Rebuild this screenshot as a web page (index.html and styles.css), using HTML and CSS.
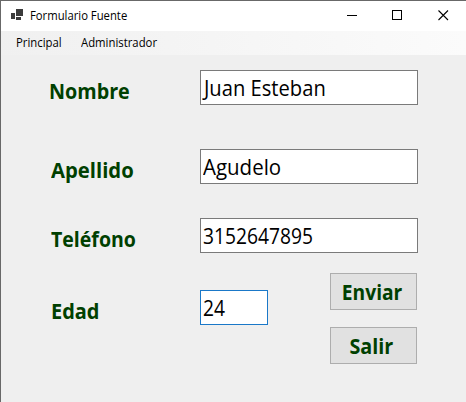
FILE: index.html
```html
<!DOCTYPE html>
<html lang="es">
<head>
<meta charset="utf-8">
<title>Formulario Fuente</title>
<link rel="stylesheet" href="styles.css">
</head>
<body>
<div class="window">
  <header class="titlebar">
    <svg class="app-icon" width="13" height="12" viewBox="0 0 13 12" fill="#3b3b3b" shape-rendering="crispEdges"><path d="M0 4h4v6H0zM5 0h7v7H5zM5 8h5v3H5z"/></svg>
    <span class="title">Formulario Fuente</span>
    <div class="controls">
      <svg width="46" height="30" viewBox="0 0 46 30" shape-rendering="crispEdges"><path d="M19 14.5h10" stroke="#000"/></svg>
      <svg width="46" height="30" viewBox="0 0 46 30" shape-rendering="crispEdges"><path d="M18.5 9.5h9v9h-9z" fill="none" stroke="#000"/></svg>
      <svg width="46" height="30" viewBox="0 0 46 30"><path d="M18.5 9.5l9.5 9.5M28 9.5l-9.5 9.5" stroke="#000" stroke-width="1.1"/></svg>
    </div>
  </header>
  <nav class="menu">
    <span class="menu-item principal">Principal</span>
    <span class="menu-item">Administrador</span>
  </nav>
  <main class="form">
    <div class="row"><span class="label nombre">Nombre</span><div class="field"><span class="value">Juan Esteban</span></div></div>
    <div class="row row-apellido"><span class="label apellido">Apellido</span><div class="field"><span class="value agudelo">Agudelo</span></div></div>
    <div class="row row-telefono"><span class="label telefono">Teléfono</span><div class="field"><span class="value digits">3152647895</span></div></div>
    <div class="bottom">
      <div class="row row-edad"><span class="label">Edad</span><div class="field small"><span class="value digits">24</span></div></div>
      <div class="actions">
        <div class="button"><span>Enviar</span></div>
        <div class="button"><span class="salir">Salir</span></div>
      </div>
    </div>
  </main>
</div>
</body>
</html>
```
FILE: styles.css
```css
* { box-sizing: border-box; }
body { margin: 0; font-family: "Open Sans", "Noto Sans", sans-serif; color: #000; }
.window { width: 466px; height: 402px; background: #efefef; border-top: 1px solid #686868; border-left: 1px solid #686868; overflow: hidden; }
.titlebar { display: flex; height: 30px; background: #fff; padding-left: 10px; }
.app-icon { margin-top: 8px; flex: none; }
.title { margin-left: 6px; font-size: 12px; line-height: 29px; white-space: nowrap; transform: scaleX(.94); transform-origin: 0 0; }
.controls { display: flex; margin-left: auto; }
.menu { display: flex; height: 24px; padding-left: 15px; background: linear-gradient(90deg, #f0f0f0, #fbfbfb); font-size: 12px; line-height: 24px; }
.menu-item { transform: scaleX(.945); transform-origin: 0 0; }
.principal { width: 65px; }
.form { padding: 15px 0 0 50px; font-size: 21px; }
.row { display: flex; height: 35px; }
.row-apellido { margin-top: 44px; }
.row-telefono { margin-top: 34px; }
.row-edad { margin-top: 37px; }
.label { width: 149px; line-height: 42px; font-weight: 700; color: #004000; transform: scaleX(.95); transform-origin: 0 0; }
.nombre { margin-left: -2px; width: 151px; transform: scaleX(.94); }
.apellido { transform: scaleX(.965); }
.telefono { transform: scaleX(.93); }
.field { width: 218px; height: 35px; border: 1px solid #7a7a7a; background: #fff; padding-left: 2px; line-height: 34px; }
.small { width: 68px; border-color: #1a78c8; }
.value { display: inline-block; padding-left: 1px; white-space: nowrap; transform: scaleX(.96); transform-origin: 0 0; }
.agudelo { padding-left: 0; transform: scaleX(.975); }
.digits { padding-left: 0; transform: scaleX(.915); }
.bottom { display: flex; }
.actions { display: flex; flex-direction: column; gap: 17px; margin: 20px 0 0 62px; }
.button { width: 87px; height: 37px; border: 1px solid #adadad; background: #e1e1e1; color: #004000; font-weight: 700; line-height: 37px; text-align: center; }
.button span { display: inline-block; margin-right: 3px; transform: scaleX(.915); }
.button .salir { margin-right: 4px; transform: scaleX(.94); }
```
